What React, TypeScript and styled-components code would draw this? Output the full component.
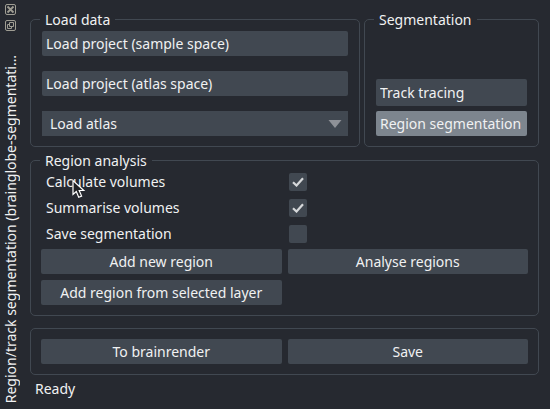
import React, { useState } from 'react';
import styled, { createGlobalStyle } from 'styled-components';

const colors = {
  background: '#262930',
  control: '#414851',
  pressed: '#7d858e',
  text: '#f0f1f2',
  arrow: '#8e9197',
  icon: '#9f9d93',
};

const GlobalStyle = createGlobalStyle`
  *, *::before, *::after { box-sizing: border-box; }
  body {
    margin: 0;
    background: ${colors.background};
    color: ${colors.text};
    font: 14px/17px "Noto Sans", "Open Sans", sans-serif;
  }
`;

const Dock = styled.main`
  display: flex;
  min-height: 100vh;
`;

const TitleBar = styled.header`
  display: flex;
  flex-direction: column;
  align-items: center;
  flex: none;
  width: 22px;
  padding: 4px 0 6px;
`;

const IconButton = styled.button`
  display: block;
  flex: none;
  width: 12px;
  height: 12px;
  margin-bottom: 4px;
  padding: 0;
  border: 0;
  background: none;

  svg { display: block; }
`;

const DockTitle = styled.h1`
  margin: auto 0 0;
  font-size: 14px;
  line-height: 20px;
  font-weight: 400;
  white-space: nowrap;
  writing-mode: vertical-rl;
  transform: rotate(180deg);
`;

const Content = styled.div`
  display: flex;
  flex-direction: column;
  flex: 1;
  min-width: 0;
  padding: 11px 11px 10px 8px;
`;

const TopRow = styled.div`
  display: grid;
  grid-template-columns: minmax(0, 330fr) minmax(0, 175fr);
  gap: 4px;
  margin-bottom: 5px;
`;

const Group = styled.fieldset<{ $side?: number }>`
  min-width: 0;
  margin: 0;
  padding: ${({ $side = 10 }) => `3px ${$side}px 10px`};
  border: 1px solid ${colors.control};
  border-radius: 5px;
`;

const GroupTitle = styled.legend<{ $indent?: number }>`
  margin-left: ${({ $indent = 0 }) => $indent}px;
  padding: 0 5px;
  line-height: 17px;
`;

const Stack = styled.div<{ $gap: number }>`
  display: flex;
  flex-direction: column;
  justify-content: flex-end;
  gap: ${({ $gap }) => $gap}px;
  height: 100%;
`;

const Button = styled.button<{ $align?: 'left' | 'center'; $tall?: boolean }>`
  display: block;
  width: 100%;
  min-width: 0;
  height: ${({ $tall }) => ($tall ? 27 : 25)}px;
  padding: 0 4px;
  border: 0;
  border-radius: 2px;
  background: ${colors.control};
  color: inherit;
  font: inherit;
  text-align: ${({ $align = 'center' }) => $align};

  &[aria-pressed='true'] { background: ${colors.pressed}; }
`;

const ButtonLabel = styled.span`
  display: block;
  overflow: hidden;
  line-height: 20px;
  white-space: nowrap;
`;

const SelectBox = styled.div`
  display: grid;
  align-items: center;

  > * { grid-area: 1 / 1; }
  > svg { justify-self: end; margin-right: 6px; pointer-events: none; }
`;

const Select = styled.select`
  appearance: none;
  width: 100%;
  height: 25px;
  padding: 0 24px 0 8px;
  border: 0;
  border-radius: 0;
  background: ${colors.control};
  color: inherit;
  font: inherit;
`;

const Options = styled.div`
  display: grid;
  gap: 8px;
  margin: 1px 0 6px;
`;

const OptionRow = styled.div`
  display: grid;
  grid-template-columns: minmax(0, 1fr) minmax(0, 1fr);
  column-gap: 6px;
  align-items: center;
  height: 18px;
`;

const OptionLabel = styled.label`
  position: relative;
  justify-self: start;
  padding-left: 5px;
  line-height: 18px;
`;

const Pointer = styled.svg`
  position: absolute;
  top: 6px;
  left: 31px;
  pointer-events: none;
`;

const CheckCell = styled.span`
  display: grid;
  place-items: center;
  justify-self: start;
  margin-left: 1px;

  > * { grid-area: 1 / 1; }
  > svg { pointer-events: none; }
`;

const Checkbox = styled.input`
  appearance: none;
  width: 18px;
  height: 18px;
  margin: 0;
  border-radius: 2px;
  background: ${colors.control};
`;

const ButtonGrid = styled.div`
  display: grid;
  grid-template-columns: minmax(0, 1fr) minmax(0, 1fr);
  gap: 6px;
`;

const Footer = styled(Group)`
  margin-top: 12px;
  padding-top: 10px;
`;

const Status = styled.p`
  margin: 4px 0 0 5px;
  line-height: 20px;
`;

const CloseIcon = () => (
  <svg width="12" height="12" viewBox="0 0 12 12" fill="none" stroke={colors.icon}>
    <rect x="0.5" y="0.5" width="10" height="10" rx="1.5" />
    <path d="M2.5 2.5l6 6M8.5 2.5l-6 6" strokeWidth="1.8" />
  </svg>
);

const FloatIcon = () => (
  <svg width="12" height="12" viewBox="0 0 12 12" fill="none" stroke={colors.icon}>
    <rect x="0.5" y="0.5" width="10" height="10" rx="1.5" />
    <path d="M4.5 2.5h4v4h-4zM4.5 4.5h-2v4h4v-2" />
  </svg>
);

const MousePointer = () => (
  <Pointer width="14" height="20" viewBox="0 0 14 20" aria-hidden="true">
    <path
      d="M1 1.5v14l3.3-3 2.4 5.8 2.9-1.2-2.4-5.6h4.6z"
      fill="#202124"
      stroke="#fff"
      strokeWidth="1.2"
    />
  </Pointer>
);

const initialOptions = [
  { id: 'calculate', label: 'Calculate volumes', checked: true },
  { id: 'summarise', label: 'Summarise volumes', checked: true },
  { id: 'save', label: 'Save segmentation', checked: false },
];

export default function App() {
  const [options, setOptions] = useState(initialOptions);
  const [mode, setMode] = useState('Region segmentation');

  const toggle = (id: string) =>
    setOptions((all) => all.map((o) => (o.id === id ? { ...o, checked: !o.checked } : o)));

  return (
    <>
      <GlobalStyle />
      <Dock>
        <TitleBar>
          <IconButton type="button" aria-label="Close"><CloseIcon /></IconButton>
          <IconButton type="button" aria-label="Float"><FloatIcon /></IconButton>
          <DockTitle>Region/track segmentation (brainglobe-segmentati…</DockTitle>
        </TitleBar>
        <Content>
          <TopRow>
            <Group $side={11}>
              <GroupTitle $indent={-2}>Load data</GroupTitle>
              <Stack $gap={15}>
                <Button type="button" $align="left">
                  <ButtonLabel>Load project (sample space)</ButtonLabel>
                </Button>
                <Button type="button" $align="left">
                  <ButtonLabel>Load project (atlas space)</ButtonLabel>
                </Button>
                <SelectBox>
                  <Select aria-label="Atlas">
                    <option>Load atlas</option>
                  </Select>
                  <svg width="14" height="8" viewBox="0 0 14 8" aria-hidden="true">
                    <path d="M0.5 0h13L7 8z" fill={colors.arrow} />
                  </svg>
                </SelectBox>
              </Stack>
            </Group>
            <Group $side={11}>
              <GroupTitle $indent={-2}>Segmentation</GroupTitle>
              <Stack $gap={5}>
                {['Track tracing', 'Region segmentation'].map((name) => (
                  <Button
                    key={name}
                    type="button"
                    $align="left"
                    $tall={name === 'Track tracing'}
                    aria-pressed={mode === name}
                    onClick={() => setMode(name)}
                  >
                    <ButtonLabel>{name}</ButtonLabel>
                  </Button>
                ))}
              </Stack>
            </Group>
          </TopRow>
          <Group>
            <GroupTitle $indent={-1}>Region analysis</GroupTitle>
            <Options>
              {options.map(({ id, label, checked }, index) => (
                <OptionRow key={id}>
                  <OptionLabel htmlFor={id}>
                    {label}
                    {index === 0 && <MousePointer />}
                  </OptionLabel>
                  <CheckCell>
                    <Checkbox id={id} type="checkbox" checked={checked} onChange={() => toggle(id)} />
                    {checked && (
                      <svg width="12" height="10" viewBox="0 0 12 10" fill="none" aria-hidden="true">
                        <path d="M1 5.2l3.5 3.3L11 1.2" stroke="#d6d8da" strokeWidth="2.2" />
                      </svg>
                    )}
                  </CheckCell>
                </OptionRow>
              ))}
            </Options>
            <ButtonGrid>
              <Button type="button">Add new region</Button>
              <Button type="button">Analyse regions</Button>
              <Button type="button">Add region from selected layer</Button>
            </ButtonGrid>
          </Group>
          <Footer as="section">
            <ButtonGrid>
              <Button type="button">To brainrender</Button>
              <Button type="button">Save</Button>
            </ButtonGrid>
          </Footer>
          <Status role="status">Ready</Status>
        </Content>
      </Dock>
    </>
  );
}
